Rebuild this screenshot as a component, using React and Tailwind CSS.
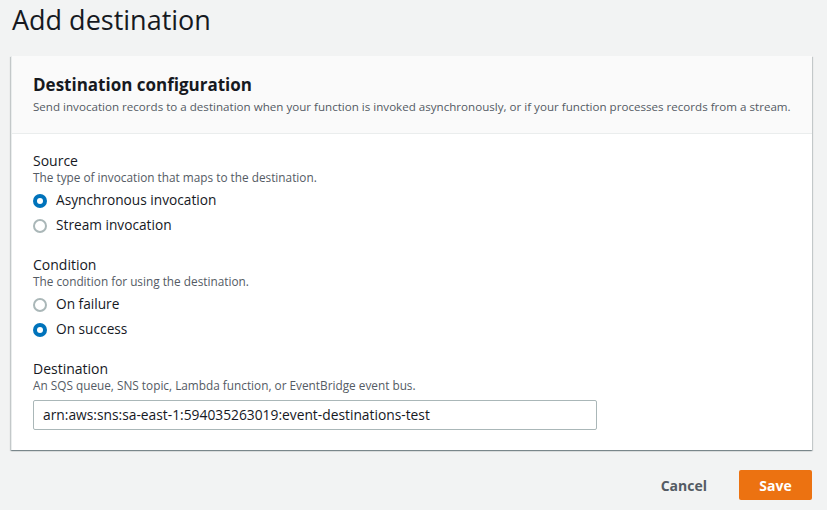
import React from "react";

function Radio({ checked, label }) {
  return (
    <div className="flex items-center h-[25px]">
      {checked ? (
        <span className="w-[14px] h-[14px] rounded-full bg-[#0073bb] flex items-center justify-center">
          <span className="w-[6px] h-[6px] rounded-full bg-white" />
        </span>
      ) : (
        <span className="w-[14px] h-[14px] rounded-full border-2 border-[#aab7b8] bg-white" />
      )}
      <span className="ml-[9px] text-[13.7px] text-[#16191f]">{label}</span>
    </div>
  );
}

export default function App() {
  return (
    <div
      className="w-[827px] h-[510px] bg-[#f2f3f3] overflow-hidden text-[#16191f]"
      style={{ fontFamily: '"Open Sans", "Noto Sans", Arial, sans-serif' }}
    >
      <h1 className="pl-[12px] pt-[2px] text-[27px] leading-[36px] font-normal text-[#16191f]">
        Add destination
      </h1>
      <div className="ml-[11px] mt-[18px] w-[801px] bg-white border-l border-[#eaeded] shadow-[0_1px_1px_0_rgba(0,28,36,0.3),1px_1px_1px_0_rgba(0,28,36,0.15),-1px_1px_1px_0_rgba(0,28,36,0.15)]">
        <div className="bg-[#fafafa] border-b border-[#eaeded] px-[21px] pt-[17px] pb-[17px]">
          <div className="text-[17px] font-bold leading-[24px]">Destination configuration</div>
          <div className="text-[11.6px] leading-[18px] text-[#545b64] mt-[1px] whitespace-nowrap">
            Send invocation records to a destination when your function is invoked asynchronously, or if your function processes records from a stream.
          </div>
        </div>
        <div className="px-[21px] pt-[17px] pb-[20px]">
          <div className="text-[14px] leading-[20px]">Source</div>
          <div className="text-[11.8px] leading-[14px] text-[#545b64] -mt-[1px]">The type of invocation that maps to the destination.</div>
          <div className="mt-[4px]">
            <Radio checked label="Asynchronous invocation" />
            <Radio label="Stream invocation" />
          </div>
          <div className="mt-[17px] text-[14px] leading-[20px]">Condition</div>
          <div className="text-[11.8px] leading-[14px] text-[#545b64] -mt-[1px]">The condition for using the destination.</div>
          <div className="mt-[4px]">
            <Radio label="On failure" />
            <Radio checked label="On success" />
          </div>
          <div className="mt-[17px] text-[14px] leading-[20px]">Destination</div>
          <div className="text-[11.8px] leading-[14px] text-[#545b64] -mt-[1px]">An SQS queue, SNS topic, Lambda function, or EventBridge event bus.</div>
          <div className="mt-[8px] w-[564px] h-[30px] border border-[#aab7b8] rounded-[2px] flex items-center px-[9px] text-[13.8px] text-[#16191f]">
            arn:aws:sns:sa-east-1:594035263019:event-destinations-test
          </div>
        </div>
      </div>
      <div className="flex justify-end items-center mt-[20px] w-[812px]">
        <button className="text-[14px] font-bold text-[#545b64] px-[20px] h-[30px] mr-[12px]">Cancel</button>
        <button className="bg-[#ec7211] text-white text-[14px] font-bold h-[30px] w-[73px] rounded-[2px]">Save</button>
      </div>
    </div>
  );
}
